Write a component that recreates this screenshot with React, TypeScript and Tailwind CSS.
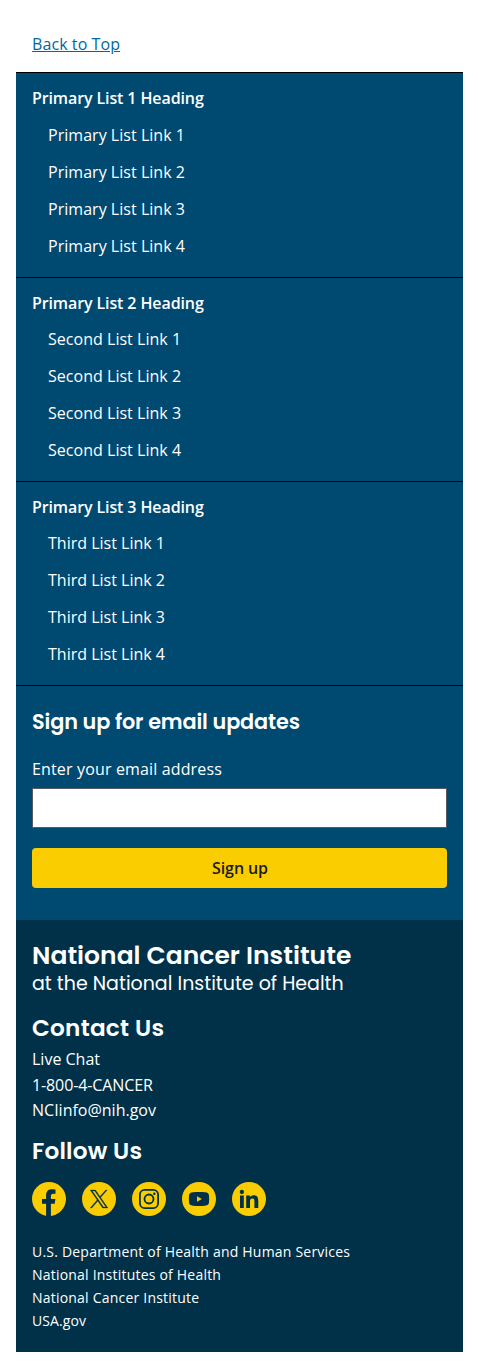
import React from "react";

const lists = [
  { heading: "Primary List 1 Heading", link: "Primary List Link", size: "h-[205px]", gap: "mt-[7px]", track: "tracking-[0.03px]" },
  { heading: "Primary List 2 Heading", link: "Second List Link", size: "h-[204px]", gap: "mt-1.5", track: "tracking-[0.03px]" },
  { heading: "Primary List 3 Heading", link: "Third List Link", size: "h-[204px]", gap: "mt-1.5", track: "tracking-normal" },
];

const agencies = [
  "U.S. Department of Health and Human Services",
  "National Institutes of Health",
  "National Cancer Institute",
  "USA.gov",
];

const display = "font-['Poppins','Inter',sans-serif]";

function Social({ label, children }: { label: string; children: React.ReactNode }) {
  return (
    <a href="#" aria-label={label} className="block size-[34px]">
      <svg viewBox="0 0 34 34" className="size-full" fill="#003149">
        <circle cx="17" cy="17" r="17" fill="#facd00" />
        {children}
      </svg>
    </a>
  );
}

export default function App() {
  return (
    <div className="h-[1368px] bg-white px-4 font-['Open_Sans',sans-serif] text-base text-white">
      <div className="h-[72px] px-4 pt-8 leading-6">
        <a href="#" className="tracking-[0.08px] text-[#00689d] underline">Back to Top</a>
      </div>
      <footer>
        <div className="bg-[#004971]">
          {lists.map((list) => (
            <section key={list.heading} className={`border-t border-black px-4 pt-[13px] ${list.size}`}>
              <h2 className="font-semibold leading-6 tracking-[-0.11px]">{list.heading}</h2>
              <ul className={`pl-4 ${list.gap} ${list.track}`}>
                {[1, 2, 3, 4].map((n) => (
                  <li key={n} className="h-[37px] pt-1.5 leading-6">{list.link} {n}</li>
                ))}
              </ul>
            </section>
          ))}
          <form className="h-[235px] border-t border-black px-4 pt-5" onSubmit={(e) => e.preventDefault()}>
            <h2 className={`${display} whitespace-nowrap text-[20.8px] font-semibold leading-8 tracking-[-0.14px]`}>Sign up for email updates</h2>
            <label htmlFor="email" className="mt-[19px] block leading-6 tracking-[0.15px]">Enter your email address</label>
            <input id="email" type="email" className="mt-[7px] block h-10 w-full border border-[#565c65] bg-white px-2 text-black" />
            <button type="submit" className="mt-5 block h-10 w-full rounded bg-[#facd00] pl-px font-semibold leading-none tracking-[-0.1px] text-[#1b1b1b]">Sign up</button>
          </form>
        </div>
        <div className="h-[432px] bg-[#003149] px-4 pt-5">
          <h2 className={`${display} whitespace-nowrap text-[25px] font-semibold leading-8 tracking-[0.03px]`}>National Cancer Institute</h2>
          <p className={`${display} whitespace-nowrap text-[19px] leading-6`}>at the National Institute of Health</p>
          <h3 className={`${display} mt-4 text-[23.2px] font-semibold leading-8 tracking-[0.24px]`}>Contact Us</h3>
          <address className="mt-[3px] text-base not-italic leading-[25.6px]">
            <div>Live Chat</div>
            <div className="tracking-[-0.11px]">1-800-4-CANCER</div>
            <div>NCIinfo@nih.gov</div>
          </address>
          <h3 className={`${display} mt-[11px] text-[23.2px] font-semibold leading-8 tracking-[0.18px]`}>Follow Us</h3>
          <div className="mt-[15px] flex gap-4">
            <Social label="Facebook">
              <path d="M14.1 34V21.7H10V17h4.1v-3.600c0-4.200 2.200-6.200 5.800-6.200 1.700 0 3.600.3 3.600.3v4.200h-2c-2 0-2.600 1-2.600 2.200V17h4.500l-.7 4.700h-3.800V34Z" />
            </Social>
            <Social label="X">
              <path stroke="#003149" strokeWidth=".3" d="M18.700 15.400 25.200 8h-1.500l-5.700 6.500L13.500 8H8.200l6.900 9.900L8.200 26h1.600l6-7 4.800 7h5.300Zm-2.100 2.500-.7-1-5.600-7.800h2.500l4.500 6.400.7 1 5.900 8.400h-2.500Z" />
            </Social>
            <Social label="Instagram">
              <rect x="7.900" y="7.900" width="18.200" height="18.200" rx="4.800" fill="none" stroke="#003149" strokeWidth="1.8" />
              <circle cx="17" cy="17" r="4.500" fill="none" stroke="#003149" strokeWidth="1.8" />
              <circle cx="22.300" cy="11.700" r="1.25" />
            </Social>
            <Social label="YouTube">
              <path d="M11 10.300c4-.4 8-.4 12 0 2.800.2 3.800 1 4 3.400.2 2.200.2 4.400 0 6.600-.2 2.400-1.200 3.200-4 3.400-4 .4-8 .4-12 0-2.800-.2-3.800-1-4-3.400-.2-2.200-.2-4.400 0-6.600.2-2.400 1.200-3.200 4-3.400Z" />
              <path d="m15 14.200 4.900 2.800-4.900 2.800Z" fill="#facd00" />
            </Social>
            <Social label="LinkedIn">
              <circle cx="9.900" cy="10" r="2.150" />
              <path d="M8 13.500h3.800V26H8ZM14.200 13.500h3.700v1.700c.5-1 1.800-2 3.700-2 3.900 0 4.700 2.600 4.700 5.900V26h-3.900v-6.100c0-1.500 0-3.300-2-3.300-2.100 0-2.400 1.600-2.400 3.200V26h-3.800Z" />
            </Social>
          </div>
          <ul className="mt-6 text-sm leading-[23px] tracking-[0.21px]">
            {agencies.map((agency) => <li key={agency} className="last:tracking-[0.08px]">{agency}</li>)}
          </ul>
        </div>
      </footer>
    </div>
  );
}
